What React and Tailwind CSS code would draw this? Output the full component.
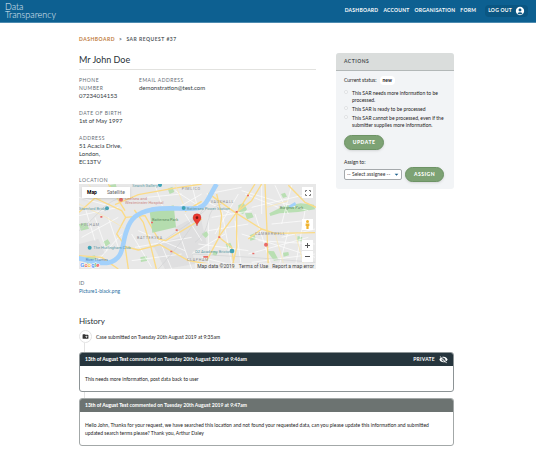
import React, { useState } from "react";
import {
  MdAccountCircle,
  MdArrowDropDown,
  MdCreateNewFolder,
  MdVisibilityOff,
} from "react-icons/md";

const navLinks = ["Dashboard", "Account", "Organisation", "Form"];

const statuses = [
  "This SAR needs more information to be processed.",
  "This SAR is ready to be processed",
  "This SAR cannot be processed, even if the submitter supplies more information.",
];

const comments = [
  {
    title: "13th of August Test",
    date: "Tuesday 20th August 2019 at 9:46am",
    body: "This needs more information, post data back to user",
    isPrivate: true,
  },
  {
    title: "13th of August Test",
    date: "Tuesday 20th August 2019 at 9:47am",
    body: "Hello John, Thanks for your request, we have searched this location and not found your requested data, can you please update this information and submitted updated search terms please? Thank you, Arthur Daley",
    isPrivate: false,
  },
];

const Header = () => (
  <header className="flex h-[23px] items-center justify-between border-b border-[#4d8bb0] bg-[#0d6091] pl-[5px] pr-[8px] text-white">
    <a href="#home" className="text-[9px] font-light leading-[8px] text-[#e3eff6]">
      Data
      <br />
      Transparency
    </a>
    <nav className="flex items-center gap-[5px] text-[5px] font-bold uppercase tracking-wider">
      {navLinks.map((link) => (
        <a key={link} href={`#${link.toLowerCase()}`}>
          {link}
        </a>
      ))}
      <button className="ml-[4px] flex items-center gap-[3px] rounded-sm bg-[#0a5682] px-[3px] py-px font-bold uppercase">
        Log out
        <MdAccountCircle size={10} />
      </button>
    </nav>
  </header>
);

const Field = ({ label, children }) => (
  <div>
    <dt className="text-[5px] uppercase leading-[8px] tracking-widest text-[#666e75]">{label}</dt>
    <dd className="text-[6px] leading-[8px] text-[#333b42]">{children}</dd>
  </div>
);

const MapDrawing = () => (
  <svg
    viewBox="12 30 711 255"
    preserveAspectRatio="xMidYMid slice"
    className="block h-full w-full"
    fontFamily="Roboto, sans-serif"
  >
    <rect x="0" y="0" width="740" height="300" fill="#e8e8e8" />

    {/* Blocks and parks */}
    <g fill="#dfdfe0">
      <path d="M300 160 375 120 395 210 340 240zM235 215 340 180 360 270 270 285z" />
      <path d="M12 210 70 195 90 240 12 260z" />
    </g>
    <g fill="#b9dfb3">
      <path d="M100 34l22-4 6 20-20 6zM12 150l22-4 8 18-24 6zM278 44l14-6 6 16-14 6z" />
      <path d="M490 94l16-8 10 20-12 14-14-6zM583 118l44-22 50-8 40 4 3 14-50 8-56 4-28 8z" />
      <path d="M510 118l20-2 6 14-20 6zM618 60l12-4 6 12-12 4zM380 180l14-8 8 10-10 10z" />
      <path d="M84 204l14-8 8 12-14 10zM524 184l14-6 4 18-16 4zM452 210l14-4 6 14-14 6z" />
      <path d="M575 230l22 2 14 26-14 2zM624 236l16-2 2 10-16 4zM668 186l14 4-2 12-14-2z" />
      <path d="M30 250l30-6 6 20-30 6zM196 250l18-4 4 14-20 4zM416 230l12 4-4 12-12-4z" />
    </g>

    {/* Minor streets */}
    <g fill="none" stroke="#fff" strokeWidth="2">
      <path d="M12 70 100 95M12 125 130 100M20 190 130 130M50 280 140 180M60 130 95 230M100 130 130 220M30 100 60 200" />
      <path d="M170 180 230 280M190 170 330 230M180 220 350 190M250 190 290 285M310 170 350 285M170 260 320 240M215 70 320 60M240 34 262 96" />
      <path d="M310 100 380 60M330 120 380 200M300 50 370 95M350 30 365 90M395 60 500 40M390 80 470 120M400 170 520 150M370 210 520 230" />
      <path d="M440 110 470 270M400 130 400 280M500 180 720 250M520 240 700 190M540 120 590 280M640 170 610 285M690 110 660 285" />
      <path d="M510 60 610 100M530 100 700 60M600 34 640 120M650 34 620 150M560 34 560 120M480 140 500 285M690 140 590 150M380 250 500 280" />
      <path d="M410 130 530 110M420 180 490 60M500 50 700 110M350 240 450 180M620 190 720 165M550 200 720 210M530 265 720 240" />
    </g>
    <g fill="none" stroke="#d0d1d3" strokeWidth="2">
      <path d="M235 220C300 175 360 140 400 100M250 285C310 220 350 160 420 50M12 170C70 130 90 70 160 70" />
      <path d="M360 205C420 160 380 110 440 90M350 240 530 250 720 265" />
    </g>

    {/* Main roads */}
    <g fill="none" stroke="#fbdb87" strokeWidth="4" strokeLinejoin="round">
      <path d="M12 115 60 72 140 110 152 130 210 125 250 195 272 200 380 135" />
      <path d="M100 30 150 110M120 92 190 62 290 44 380 30M152 130 125 180 150 215 160 285M178 108 205 145 228 220 244 285" />
      <path d="M140 215 190 228 255 212 340 260 400 270M400 58 480 115 560 165 600 178 720 176" />
      <path d="M485 118 540 30M485 118 485 220 470 285M425 60 440 125 432 190 470 220 478 285M432 190 395 260" />
      <path d="M430 190 485 115 530 80 560 30M570 30 576 170 580 285M640 34 690 85 723 100M560 165 520 195" />
      <path d="M12 245 80 250 130 285M330 112 380 82" />
    </g>
    <g fill="none" stroke="#fce9ae" strokeWidth="2">
      <path d="M12 90 90 128 160 170M40 30 80 80M300 30 325 90M575 100 640 80M600 178 630 285M660 176 690 285" />
    </g>

    {/* Battersea Park and the river round it */}
    <path d="M224 112 296 94 303 160 232 176z" fill="#b4dcae" />
    <path
      d="M8 252C40 258 70 272 100 266 150 256 140 206 155 170 166 134 186 116 230 107 280 98 330 108 370 102 395 96 400 70 425 30"
      fill="none"
      stroke="#a3d1fb"
      strokeWidth="14"
    />
    <path d="M640 96 660 84 664 92 646 102z" fill="#a3d1fb" />

    {/* Place markers */}
    <g fill="#3fa3b5">
      <circle cx="96" cy="103" r="6" />
      <circle cx="255" cy="33" r="6" />
      <circle cx="326" cy="102" r="6" />
      <circle cx="44" cy="221" r="6" />
      <circle cx="471" cy="231" r="7" />
    </g>
    <g fill="#e86c67">
      <circle cx="138" cy="77" r="6" />
      <circle cx="573" cy="212" r="6" />
      <path d="M228 143h6v5h-6zM302 166h6v5h-6zM286 230h6v5h-6zM430 187h6v5h-6zM482 111h6v5h-6zM385 246h14v5h-14zM516 62h6v5h-6zM532 236h6v5h-6zM76 126h6v5h-6z" />
    </g>

    {/* Labels */}
    <g fontSize="12" fill="#5d9ba6">
      <text x="172" y="38">Search Gallery</text>
      <text x="12" y="109">Stamford Bridge</text>
      <text x="55" y="226">The Hurlingham Club</text>
      <text x="335" y="107">Battersea Power Station</text>
      <text x="360" y="236">O2 Academy Brixton</text>
    </g>
    <g fontSize="12" fill="#cb8985">
      <text x="150" y="77">Chelsea and</text>
      <text x="150" y="89">Westminster Hospital</text>
    </g>
    <g fontSize="12" fill="#5c8d61">
      <text x="231" y="140">Battersea Park</text>
      <text x="614" y="104">Burgess Park</text>
    </g>
    <g fontSize="11" fill="#888c91" letterSpacing="2">
      <text x="18" y="156">FULHAM</text>
      <text x="320" y="48">PIMLICO</text>
      <text x="186" y="195">BATTERSEA</text>
      <text x="407" y="86">VAUXHALL</text>
      <text x="540" y="182">CAMBERWELL</text>
      <text x="336" y="262">CLAPHAM</text>
    </g>
    <text x="32" y="262" fontSize="11" fill="#4f7fb0">River Thames</text>

    {/* Pin */}
    <path d="M366 156C364 143 354 141 354 131a12 12 0 0 1 24 0c0 10-10 12-12 25z" fill="#ea3a30" stroke="#b52a22" />
    <circle cx="366" cy="131" r="4" fill="#7c1611" />

    <text x="16" y="279" fontSize="18" fontWeight="500" stroke="#fff" strokeWidth="3" paintOrder="stroke">
      <tspan fill="#4285f4">G</tspan>
      <tspan fill="#ea4335">o</tspan>
      <tspan fill="#fbbc05">o</tspan>
      <tspan fill="#4285f4">g</tspan>
      <tspan fill="#34a853">l</tspan>
      <tspan fill="#ea4335">e</tspan>
    </text>
  </svg>
);

const LocationMap = () => (
  <div className="relative h-[85px] overflow-hidden font-[Roboto,sans-serif]">
    <MapDrawing />
    <div className="absolute left-[3px] top-[3px] flex h-[11px] bg-white text-[5px] shadow-sm">
      <button className="px-[5px] font-bold text-black">Map</button>
      <button className="px-[5px] text-[#666]">Satellite</button>
    </div>
    <button
      aria-label="Full screen"
      className="absolute right-[3px] top-[3px] flex size-[11px] items-center justify-center bg-white"
    >
      <svg viewBox="0 0 12 12" className="size-[6px]" fill="none" stroke="#777" strokeWidth="2">
        <path d="M1 4V1h3M8 1h3v3M11 8v3H8M4 11H1V8" />
      </svg>
    </button>
    <button
      aria-label="Street view"
      className="absolute right-[3px] top-[35px] flex size-[11px] items-center justify-center bg-white"
    >
      <svg viewBox="0 0 12 24" className="h-[9px] w-[5px]" fill="#f0b32e">
        <circle cx="6" cy="4" r="4" />
        <path d="M1 9h10v7H9v8H3v-8H1z" />
      </svg>
    </button>
    <div className="absolute bottom-[7px] right-[3px] flex w-[11px] flex-col divide-y divide-[#e6e6e6] bg-white">
      <button aria-label="Zoom in" className="flex h-[11px] items-center justify-center">
        <svg viewBox="0 0 10 10" className="size-[5px]" stroke="#555" strokeWidth="2">
          <path d="M5 0v10M0 5h10" />
        </svg>
      </button>
      <button aria-label="Zoom out" className="flex h-[11px] items-center justify-center">
        <svg viewBox="0 0 10 10" className="size-[5px]" stroke="#555" strokeWidth="2">
          <path d="M0 5h10" />
        </svg>
      </button>
    </div>
    <div className="absolute bottom-0 right-0 flex gap-[4px] bg-[#f0f0f0]/80 px-[2px] text-[5px] leading-[6px] text-[#444]">
      <span>Map data ©2019</span>
      <a href="#terms">Terms of Use</a>
      <a href="#report">Report a map error</a>
    </div>
  </div>
);

const Actions = () => {
  const [status, setStatus] = useState(null);

  return (
    <aside className="w-[118px] shrink-0 self-start overflow-hidden rounded-[3px] bg-[#f2f4f6]">
      <h2 className="border-b border-[#b3b8b8] bg-[#dadddc] px-[8px] py-[5px] text-[5px] font-bold uppercase leading-[7px] tracking-widest text-[#4a4f52]">
        Actions
      </h2>
      <div className="px-[8px] pb-[7px] pt-[5px] text-[5px] leading-[7px] text-[#222]">
        <p className="flex items-center gap-[3px]">
          Current status:
          <strong className="rounded-sm bg-white px-[3px] py-px">new</strong>
        </p>
        <fieldset className="mt-[5px] flex flex-col gap-[2px]">
          {statuses.map((text, idx) => (
            <label key={text} className="flex items-start gap-[4px]">
              <input
                type="radio"
                name="status"
                checked={status === idx}
                onChange={() => setStatus(idx)}
                className="size-[4px] shrink-0 appearance-none rounded-full border border-[#dfe1e3] bg-white checked:bg-[#7aa071]"
              />
              {text}
            </label>
          ))}
        </fieldset>
        <button className="mt-[6px] h-[15px] w-[40px] rounded-full border border-[#6d9365] bg-[#7da274] text-[5px] font-black uppercase tracking-widest text-white shadow-sm">
          Update
        </button>
        <label htmlFor="assignee" className="mt-[9px] block">
          Assign to:
        </label>
        <div className="mt-px flex items-center gap-[3px]">
          <div className="relative w-[58px]">
            <select
              id="assignee"
              className="block h-[11px] w-full appearance-none rounded-[2px] border border-[#a5a9ac] bg-white pl-[2px] text-[5px] text-[#333]"
            >
              <option>-- Select assignee --</option>
            </select>
            <MdArrowDropDown
              size={9}
              className="pointer-events-none absolute right-px top-px text-[#1b5f8c]"
            />
          </div>
          <button className="h-[15px] w-[39px] rounded-full border border-[#6d9365] bg-[#7da274] text-[5px] font-black uppercase tracking-widest text-white shadow-sm">
            Assign
          </button>
        </div>
      </div>
    </aside>
  );
};

const Comment = ({ title, date, body, isPrivate }) => (
  <article
    className={`overflow-hidden rounded-[3px] border bg-white ${
      isPrivate ? "border-[#8d9496]" : "border-[#a3a8a8]"
    }`}
  >
    <header
      className={`flex h-[13px] items-center justify-between px-[5px] text-[5px] font-bold text-white ${
        isPrivate ? "bg-[#26353d]" : "bg-[#6c7371]"
      }`}
    >
      <h3>
        <span className="font-black">{title}</span> commented on {date}
      </h3>
      {isPrivate && (
        <span className="flex items-center gap-[4px] uppercase tracking-wider">
          Private
          <MdVisibilityOff size={9} />
        </span>
      )}
    </header>
    <p className="px-[5px] pb-[8px] pt-[9px] text-[5px] leading-[8px] text-[#222]">{body}</p>
  </article>
);

const App = () => (
  <div className="min-h-screen bg-white font-[Lato,sans-serif]">
    <Header />
    <main className="pb-[4px] pl-[79px] pr-[82px] pt-[12px]">
      <div className="flex gap-[20px]">
        <div className="min-w-0 flex-1">
          <nav className="flex gap-[4px] text-[5px] font-bold uppercase leading-[8px] tracking-widest text-[#555c61]">
            <a href="#dashboard" className="text-[#c07a3a]">
              Dashboard
            </a>
            <span>&gt;</span>
            <span>SAR Request #37</span>
          </nav>
          <h1 className="mt-[11px] border-b border-[#e2e2df] pb-[3px] text-[9px] leading-[12px] text-[#2a3238]">
            Mr John Doe
          </h1>
          <dl className="mt-[6px] grid grid-cols-[40px_1fr] gap-x-[20px] gap-y-[9px]">
            <Field label="Phone number">07234014153</Field>
            <Field label="Email address">demonstration@test.com</Field>
            <div className="col-span-2">
              <Field label="Date of birth">1st of May 1997</Field>
            </div>
            <div className="col-span-2">
              <Field label="Address">
                51 Acacia Drive,
                <br />
                London,
                <br />
                EC13TV
              </Field>
            </div>
          </dl>
          <h2 className="mt-[10px] text-[5px] uppercase leading-[8px] tracking-widest text-[#666e75]">
            Location
          </h2>
          <LocationMap />
          <dl className="mt-[10px]">
            <dt className="text-[5px] leading-[8px] text-[#666e75]">ID</dt>
            <dd className="text-[5px] leading-[8px]">
              <a href="#file" className="text-[#1f6c9e]">
                Picture1-black.png
              </a>
            </dd>
          </dl>
        </div>
        <div className="flex pt-[18px]">
          <Actions />
        </div>
      </div>

      <section className="mt-[21px]">
        <h2 className="text-[8px] leading-[10px] text-[#2a3238]">History</h2>
        <div className="mt-[4px] flex items-center gap-[4px] text-[5px] leading-[8px] text-[#222]">
          <span className="flex size-[13px] items-center justify-center rounded-full border border-[#e3e3e3] text-[#333]">
            <MdCreateNewFolder size={7} />
          </span>
          Case submitted on Tuesday 20th August 2019 at 9:35am
        </div>
        <div className="ml-[5px] h-[9px] border-l border-[#e3e3e3]" />
        <Comment {...comments[0]} />
        <div className="ml-[5px] h-[6px] border-l border-[#e3e3e3]" />
        <Comment {...comments[1]} />
      </section>
    </main>
  </div>
);

export default App;
